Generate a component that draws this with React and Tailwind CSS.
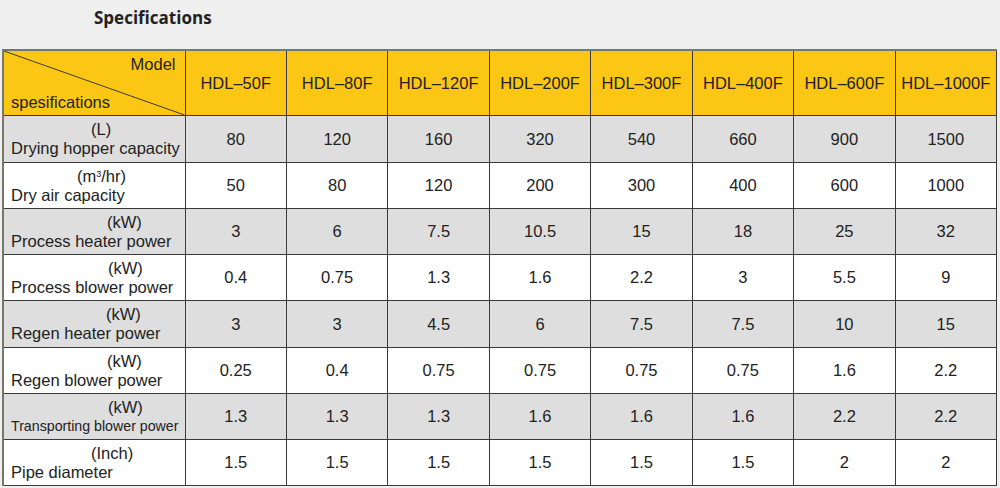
const models = ["HDL–50F", "HDL–80F", "HDL–120F", "HDL–200F", "HDL–300F", "HDL–400F", "HDL–600F", "HDL–1000F"];

const rows = [
  { unit: "(L)", ux: "pl-[80px]", label: "Drying hopper capacity", values: ["80", "120", "160", "320", "540", "660", "900", "1500"], gray: true, h: "h-[47px]" },
  { unit: <>(m<sup className="text-[9px]">3</sup>/hr)</>, ux: "pl-[66px]", label: "Dry air capacity", values: ["50", "80", "120", "200", "300", "400", "600", "1000"], h: "h-[46px]" },
  { unit: "(kW)", ux: "pl-[96px]", label: "Process heater power", values: ["3", "6", "7.5", "10.5", "15", "18", "25", "32"], gray: true, h: "h-[46px]" },
  { unit: "(kW)", ux: "pl-[97px]", label: "Process blower power", values: ["0.4", "0.75", "1.3", "1.6", "2.2", "3", "5.5", "9"], h: "h-[46px]" },
  { unit: "(kW)", ux: "pl-[95px]", label: "Regen heater power", values: ["3", "3", "4.5", "6", "7.5", "7.5", "10", "15"], gray: true, h: "h-[47px]" },
  { unit: "(kW)", ux: "pl-[96px]", label: "Regen blower power", values: ["0.25", "0.4", "0.75", "0.75", "0.75", "0.75", "1.6", "2.2"], h: "h-[46px]" },
  { unit: "(kW)", ux: "pl-[97px]", label: "Transporting blower power", small: true, values: ["1.3", "1.3", "1.3", "1.6", "1.6", "1.6", "2.2", "2.2"], gray: true, h: "h-[46px]" },
  { unit: "(Inch)", ux: "pl-[80px]", label: "Pipe diameter", values: ["1.5", "1.5", "1.5", "1.5", "1.5", "1.5", "2", "2"], h: "h-[46px]" },
];

export default function App() {
  return (
    <div className="w-[1000px] h-[488px] overflow-hidden bg-[#efefef] text-[#222]" style={{ fontFamily: "'Liberation Sans', Arial, sans-serif" }}>
      <div className="h-[49px] pl-[94px] pt-[5px]">
        <h1 className="text-[17px] font-bold text-[#222]" style={{ fontFamily: "'Open Sans', sans-serif" }}>
          Specifications
        </h1>
      </div>
      <div className="pl-[2px]">
        <table className="w-[995px] table-fixed border-collapse border-l-2 border-t-2 border-[#77776c] text-[16.5px] leading-[19px]">
          <colgroup>
            <col className="w-[182px]" />
            {models.map((m) => (
              <col key={m} />
            ))}
          </colgroup>
          <thead>
            <tr className="h-[64px] bg-[#fcc614]">
              <th className="relative border border-[#3a3a3a] border-l-0 border-t-0 p-0 font-normal">
                <svg className="absolute inset-0 w-full h-full" viewBox="0 0 182 64" preserveAspectRatio="none">
                  <line x1="0" y1="0" x2="182" y2="64" stroke="#3a3a30" strokeWidth="1" />
                </svg>
                <div className="relative flex flex-col h-[64px] pl-[7px] pr-[9px] pt-[4px]">
                  <span className="self-end">Model</span>
                  <span className="mt-auto self-start mb-[3px]">spesifications</span>
                </div>
              </th>
              {models.map((m) => (
                <th key={m} className="border border-[#3a3a3a] border-t-0 font-normal text-center p-0 whitespace-nowrap">
                  {m}
                </th>
              ))}
            </tr>
          </thead>
          <tbody>
            {rows.map((r, i) => (
              <tr key={i} className={`${r.h} ${r.gray ? "bg-[#dedede]" : "bg-white"}`}>
                <td className="border border-[#3a3a3a] border-l-0 p-0 pl-[7px]">
                  <div className={r.ux}>{r.unit}</div>
                  <div className={r.small ? "text-[14.2px] whitespace-nowrap" : "whitespace-nowrap"}>{r.label}</div>
                </td>
                {r.values.map((v, j) => (
                  <td key={j} className="border border-[#3a3a3a] text-center p-0">
                    {v}
                  </td>
                ))}
              </tr>
            ))}
          </tbody>
        </table>
      </div>
    </div>
  );
}
